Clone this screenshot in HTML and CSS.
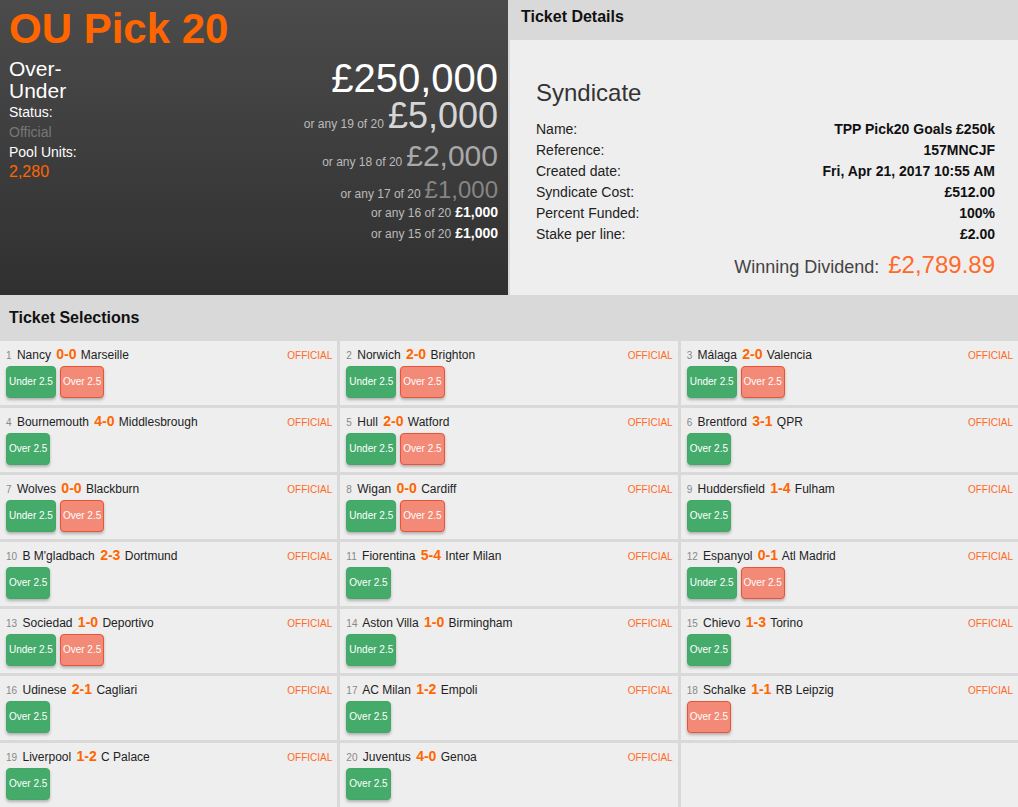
FILE: index.html
```html
<!DOCTYPE html>
<html lang="en">
<head>
  <meta charset="UTF-8">
  <title>OU Pick 20 - Ticket</title>
  <meta name="viewport" content="width=device-width, initial-scale=1.0">
  <link rel="stylesheet" href="styles.css">
</head>
<body>
  <!-- Pool summary + ticket details -->
  <div class="top">
    <div class="hero">
      <h1 class="hero-title">OU Pick 20</h1>
      <div class="hero-body">
        <div class="game-info">
          <div class="game-type">Over-Under</div>
          <div class="info-line">Status:</div>
          <div class="info-line muted">Official</div>
          <div class="info-line">Pool Units:</div>
          <div class="info-line units">2,280</div>
        </div>
        <div class="prizes">
          <div class="prize prize-1"><span class="amount">£250,000</span></div>
          <div class="prize prize-2"><span class="or">or any 19 of 20</span><span class="amount">£5,000</span></div>
          <div class="prize prize-3"><span class="or">or any 18 of 20</span><span class="amount">£2,000</span></div>
          <div class="prize prize-4"><span class="or">or any 17 of 20</span><span class="amount">£1,000</span></div>
          <div class="prize prize-5"><span class="or">or any 16 of 20</span><span class="amount">£1,000</span></div>
          <div class="prize prize-5"><span class="or">or any 15 of 20</span><span class="amount">£1,000</span></div>
        </div>
      </div>
    </div>

    <div class="details">
      <div class="panel-head">Ticket Details</div>
      <div class="details-body">
        <h2 class="syndicate-title">Syndicate</h2>
        <div class="detail-row"><span>Name:</span><span class="val">TPP Pick20 Goals £250k</span></div>
        <div class="detail-row"><span>Reference:</span><span class="val">157MNCJF</span></div>
        <div class="detail-row"><span>Created date:</span><span class="val">Fri, Apr 21, 2017 10:55 AM</span></div>
        <div class="detail-row"><span>Syndicate Cost:</span><span class="val">£512.00</span></div>
        <div class="detail-row"><span>Percent Funded:</span><span class="val">100%</span></div>
        <div class="detail-row"><span>Stake per line:</span><span class="val">£2.00</span></div>
        <div class="dividend">Winning Dividend: <span class="dividend-amount">£2,789.89</span></div>
      </div>
    </div>
  </div>

  <div class="section-head">Ticket Selections</div>

  <div class="selections">
    <div class="card">
      <div class="match"><span><span class="num">1</span> Nancy <span class="score">0-0</span> Marseille</span><span class="official">OFFICIAL</span></div>
      <div class="picks"><span class="pick">Under 2.5</span><span class="pick lost">Over 2.5</span></div>
    </div>
    <div class="card">
      <div class="match"><span><span class="num">2</span> Norwich <span class="score">2-0</span> Brighton</span><span class="official">OFFICIAL</span></div>
      <div class="picks"><span class="pick">Under 2.5</span><span class="pick lost">Over 2.5</span></div>
    </div>
    <div class="card">
      <div class="match"><span><span class="num">3</span> Málaga <span class="score">2-0</span> Valencia</span><span class="official">OFFICIAL</span></div>
      <div class="picks"><span class="pick">Under 2.5</span><span class="pick lost">Over 2.5</span></div>
    </div>

    <div class="card">
      <div class="match"><span><span class="num">4</span> Bournemouth <span class="score">4-0</span> Middlesbrough</span><span class="official">OFFICIAL</span></div>
      <div class="picks"><span class="pick">Over 2.5</span></div>
    </div>
    <div class="card">
      <div class="match"><span><span class="num">5</span> Hull <span class="score">2-0</span> Watford</span><span class="official">OFFICIAL</span></div>
      <div class="picks"><span class="pick">Under 2.5</span><span class="pick lost">Over 2.5</span></div>
    </div>
    <div class="card">
      <div class="match"><span><span class="num">6</span> Brentford <span class="score">3-1</span> QPR</span><span class="official">OFFICIAL</span></div>
      <div class="picks"><span class="pick">Over 2.5</span></div>
    </div>

    <div class="card">
      <div class="match"><span><span class="num">7</span> Wolves <span class="score">0-0</span> Blackburn</span><span class="official">OFFICIAL</span></div>
      <div class="picks"><span class="pick">Under 2.5</span><span class="pick lost">Over 2.5</span></div>
    </div>
    <div class="card">
      <div class="match"><span><span class="num">8</span> Wigan <span class="score">0-0</span> Cardiff</span><span class="official">OFFICIAL</span></div>
      <div class="picks"><span class="pick">Under 2.5</span><span class="pick lost">Over 2.5</span></div>
    </div>
    <div class="card">
      <div class="match"><span><span class="num">9</span> Huddersfield <span class="score">1-4</span> Fulham</span><span class="official">OFFICIAL</span></div>
      <div class="picks"><span class="pick">Over 2.5</span></div>
    </div>

    <div class="card">
      <div class="match"><span><span class="num">10</span> B M'gladbach <span class="score">2-3</span> Dortmund</span><span class="official">OFFICIAL</span></div>
      <div class="picks"><span class="pick">Over 2.5</span></div>
    </div>
    <div class="card">
      <div class="match"><span><span class="num">11</span> Fiorentina <span class="score">5-4</span> Inter Milan</span><span class="official">OFFICIAL</span></div>
      <div class="picks"><span class="pick">Over 2.5</span></div>
    </div>
    <div class="card">
      <div class="match"><span><span class="num">12</span> Espanyol <span class="score">0-1</span> Atl Madrid</span><span class="official">OFFICIAL</span></div>
      <div class="picks"><span class="pick">Under 2.5</span><span class="pick lost">Over 2.5</span></div>
    </div>

    <div class="card">
      <div class="match"><span><span class="num">13</span> Sociedad <span class="score">1-0</span> Deportivo</span><span class="official">OFFICIAL</span></div>
      <div class="picks"><span class="pick">Under 2.5</span><span class="pick lost">Over 2.5</span></div>
    </div>
    <div class="card">
      <div class="match"><span><span class="num">14</span> Aston Villa <span class="score">1-0</span> Birmingham</span><span class="official">OFFICIAL</span></div>
      <div class="picks"><span class="pick">Under 2.5</span></div>
    </div>
    <div class="card">
      <div class="match"><span><span class="num">15</span> Chievo <span class="score">1-3</span> Torino</span><span class="official">OFFICIAL</span></div>
      <div class="picks"><span class="pick">Over 2.5</span></div>
    </div>

    <div class="card">
      <div class="match"><span><span class="num">16</span> Udinese <span class="score">2-1</span> Cagliari</span><span class="official">OFFICIAL</span></div>
      <div class="picks"><span class="pick">Over 2.5</span></div>
    </div>
    <div class="card">
      <div class="match"><span><span class="num">17</span> AC Milan <span class="score">1-2</span> Empoli</span><span class="official">OFFICIAL</span></div>
      <div class="picks"><span class="pick">Over 2.5</span></div>
    </div>
    <div class="card">
      <div class="match"><span><span class="num">18</span> Schalke <span class="score">1-1</span> RB Leipzig</span><span class="official">OFFICIAL</span></div>
      <div class="picks"><span class="pick lost">Over 2.5</span></div>
    </div>

    <div class="card">
      <div class="match"><span><span class="num">19</span> Liverpool <span class="score">1-2</span> C Palace</span><span class="official">OFFICIAL</span></div>
      <div class="picks"><span class="pick">Over 2.5</span></div>
    </div>
    <div class="card">
      <div class="match"><span><span class="num">20</span> Juventus <span class="score">4-0</span> Genoa</span><span class="official">OFFICIAL</span></div>
      <div class="picks"><span class="pick">Over 2.5</span></div>
    </div>
    <div class="card"></div>
  </div>
</body>
</html>
```

FILE: styles.css
```css
/* Base */
body {
  margin: 0;
  background: #d9d9d9;
  font-family: "Liberation Sans", Arial, sans-serif;
  color: #222;
}

/* Top: pool summary + details */
.top {
  display: flex;
  gap: 2px;
  height: 295px;
}
.hero {
  width: 508px;
  box-sizing: border-box;
  padding: 5px 10px 0 9px;
  background: linear-gradient(#4b4b4b, #303030);
  color: #fff;
}
.hero-title {
  margin: 0;
  font-size: 42px;
  line-height: 48px;
  font-weight: bold;
  color: #f60;
}
.hero-body {
  display: flex;
  justify-content: space-between;
  padding-top: 5px;
}
.game-info {
  width: 90px;
}
.game-type {
  font-size: 21px;
  line-height: 22px;
}
.info-line {
  font-size: 14px;
  line-height: 20px;
}
.info-line.muted {
  color: #777;
}
.info-line.units {
  font-size: 16px;
  color: #f60;
}
.prizes {
  text-align: right;
  padding-top: 1px;
}
.prize {
  white-space: nowrap;
}
.prize .or {
  margin-right: 4px;
  font-size: 12px;
  line-height: 1;
  color: #bbb;
}
.prize-1 { font-size: 40px; line-height: 39px; color: #fff; }
.prize-2 { font-size: 36px; line-height: 35px; color: #d6d6d6; }
.prize-3 { font-size: 30px; line-height: 45px; color: #a8a8a8; }
.prize-4 { font-size: 24px; line-height: 24px; color: #858585; }
.prize-5 { font-size: 14px; line-height: 21px; color: #fff; font-weight: bold; }
.prize-5 .or { font-weight: normal; }

.details {
  flex: 1;
  background: #eee;
}
.panel-head {
  height: 40px;
  box-sizing: border-box;
  padding: 8px 11px;
  background: #d9d9d9;
  font-size: 16px;
  line-height: 18px;
  font-weight: bold;
  color: #111;
}
.details-body {
  padding: 39px 23px 0 26px;
}
.syndicate-title {
  margin: 0 0 12px;
  font-size: 24px;
  line-height: 28px;
  font-weight: normal;
  color: #333;
}
.detail-row {
  display: flex;
  justify-content: space-between;
  font-size: 14px;
  line-height: 21px;
  color: #222;
}
.detail-row .val {
  font-weight: bold;
  color: #111;
}
.dividend {
  margin-top: 5px;
  text-align: right;
  font-size: 18px;
  line-height: 30px;
  color: #444;
}
.dividend-amount {
  margin-left: 4px;
  font-size: 24px;
  color: #ff6a2a;
}

/* Selections */
.section-head {
  height: 46px;
  box-sizing: border-box;
  padding: 14px 9px 0;
  font-size: 16px;
  line-height: 18px;
  font-weight: bold;
  color: #111;
}
.selections {
  display: grid;
  grid-template-columns: repeat(3, 1fr);
  gap: 3px;
}
.card {
  height: 64px;
  box-sizing: border-box;
  padding: 4px 5px 0 6px;
  background: #eee;
}
.match {
  display: flex;
  justify-content: space-between;
  align-items: baseline;
  font-size: 12px;
  line-height: 18px;
  color: #222;
}
.num {
  margin-right: 2px;
  font-size: 10px;
  color: #888;
}
.score {
  margin: 0 1px 0 2px;
  font-size: 14px;
  font-weight: bold;
  color: #f60;
}
.official {
  font-size: 10px;
  color: #ff6a1f;
}
.picks {
  display: flex;
  gap: 4px;
  margin-top: 1px;
}
.pick {
  height: 32px;
  box-sizing: border-box;
  padding: 0 2px;
  border: 1px solid #43a866;
  border-radius: 4px;
  background: #45ab6b;
  color: #fff;
  font-size: 10px;
  line-height: 30px;
  box-shadow: 0 2px 3px rgba(0,0,0,0.25);
}
.pick.lost {
  background: #f28a77;
  border-color: #ea5434;
}
```
